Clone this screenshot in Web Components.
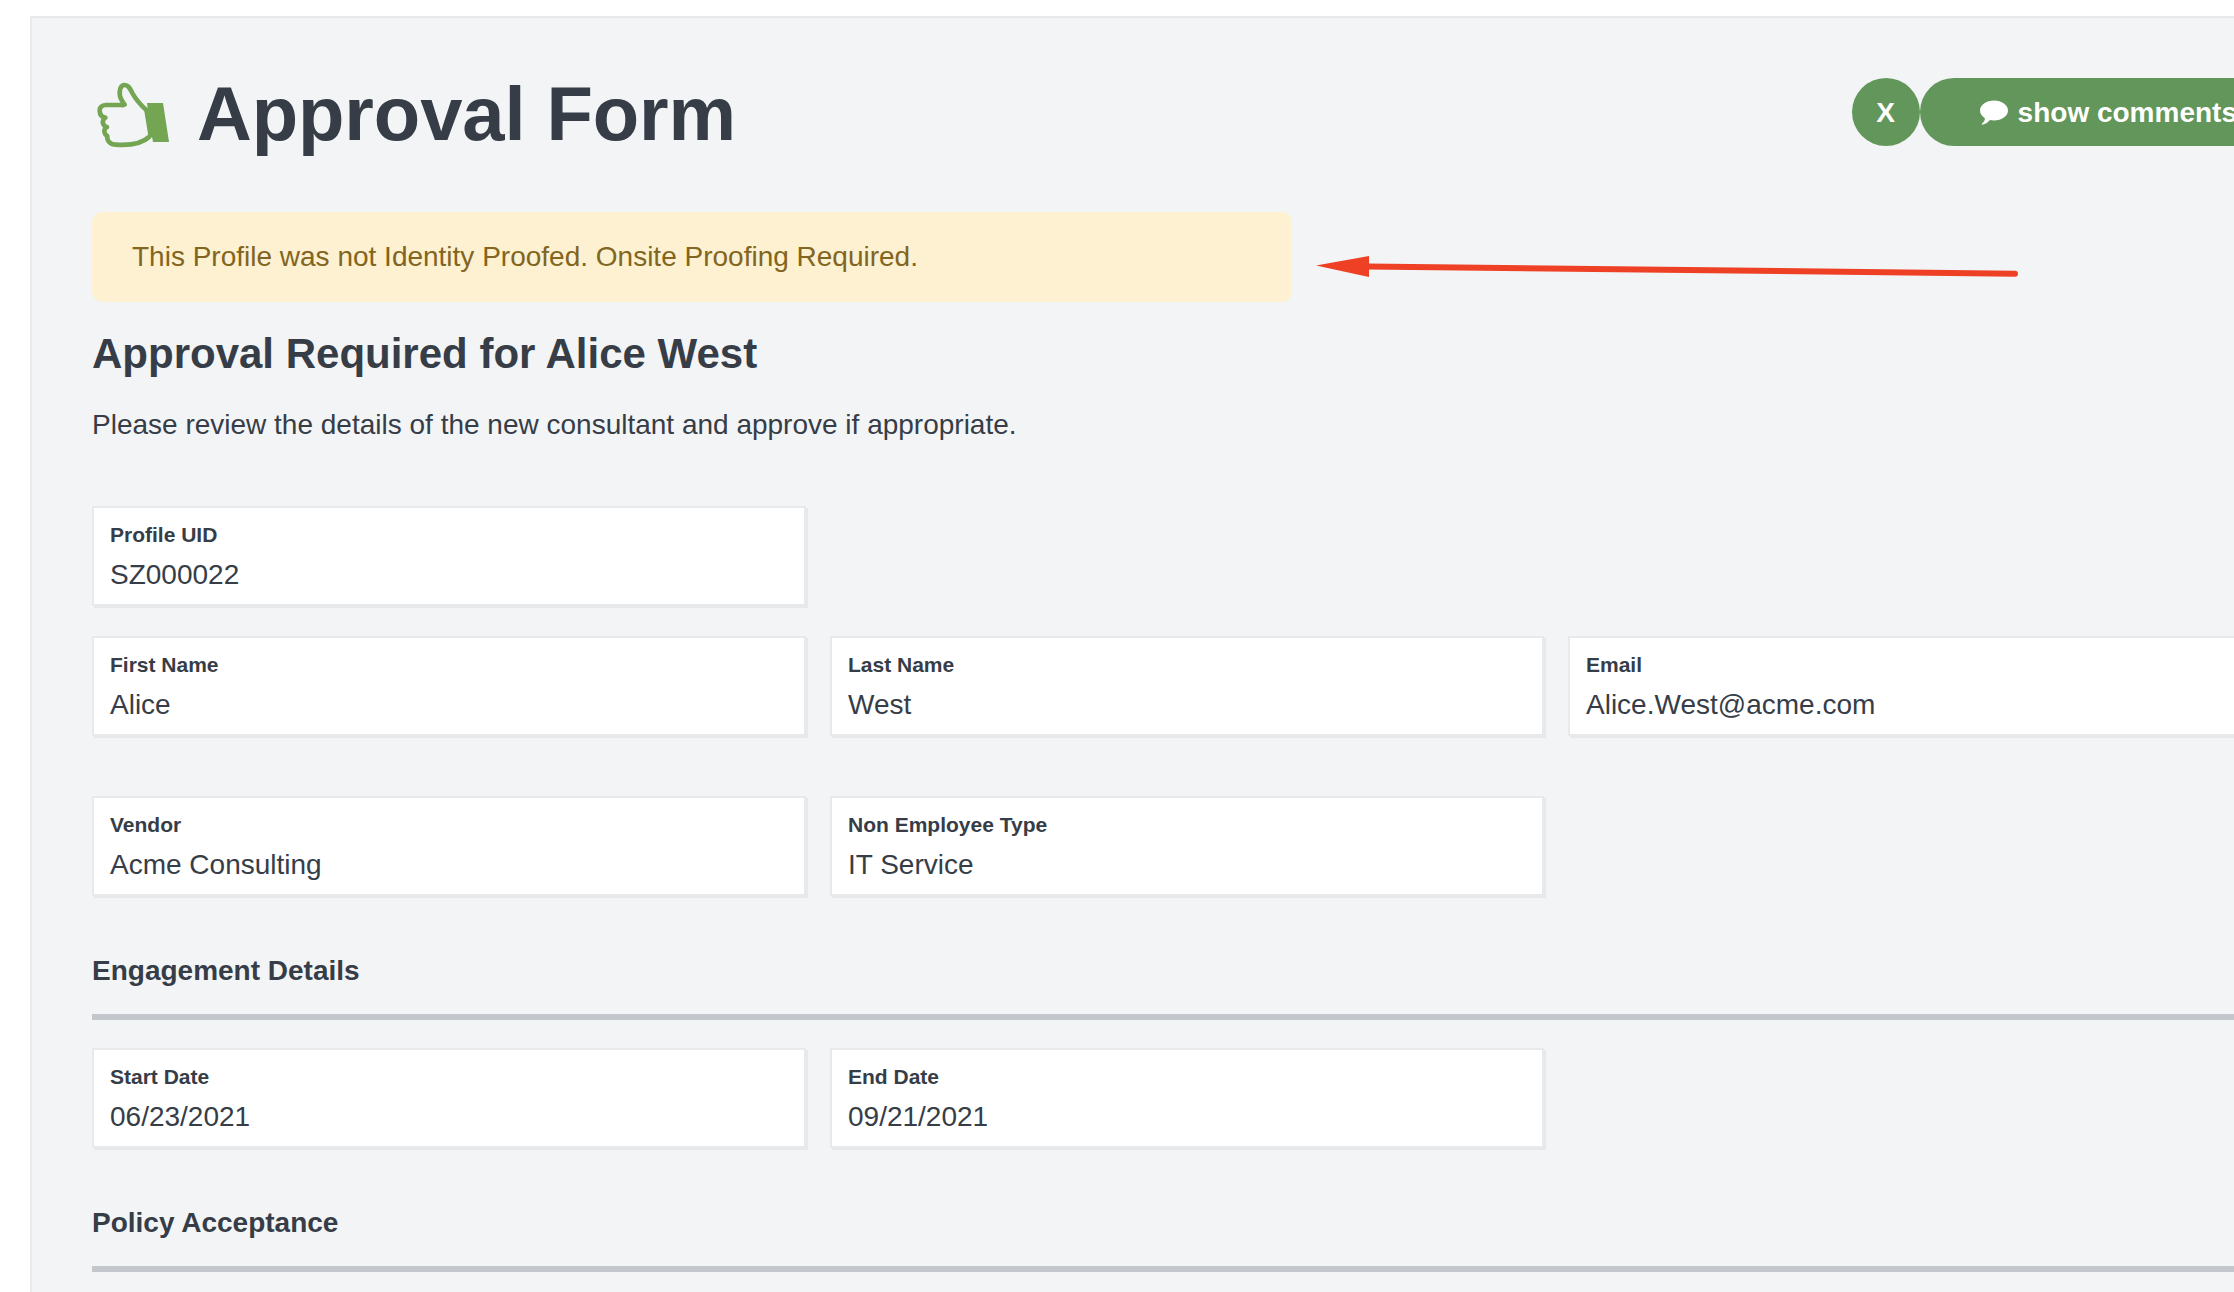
<!DOCTYPE html>
<html lang="en">
<head>
<meta charset="utf-8">
<title>Approval Form</title>
<style>
html,body{margin:0;height:100%;overflow:hidden;background:#fff}
body{font-family:"Liberation Sans",Arial,Helvetica,sans-serif;font-size:28px;color:#363d47}
</style>
</head>
<body>
<approval-page></approval-page>
<script>
const define = (name, html) => {
  const t = document.createElement('template');
  t.innerHTML = html;
  customElements.define(name, class extends HTMLElement {
    constructor() {
      super();
      this.attachShadow({mode: 'open'}).append(t.content.cloneNode(true));
    }
  });
};

define('thumb-icon', `
<style>:host{display:block;width:80px;height:90px}svg{display:block}</style>
<svg width="80" height="90" viewBox="36 0 240 270" aria-hidden="true">
  <path fill="none" stroke="#73a553" stroke-width="14" stroke-linejoin="round" stroke-linecap="round"
    d="M200 121C183 106 166 86 157 69C150 56 146 45 134 45C121 45 117 62 120 78C122 90 129 97 134 104C131 106 128 105 122 105H78C64 105 58 114 59 123C60 137 67 142 76 143C70 147 66 155 70 162C72 167 76 170 81 171C73 175 71 184 75 191C77 195 80 196 82 199C80 212 91 224 108 224C139 226 184 223 207 201C209 199 210 197 211 194"/>
  <path fill="#73a553" d="M201 99H249L267 216H219L216 200L205 197L192 118L203 114Z"/>
</svg>`);

define('comment-icon', `
<style>:host{display:block;width:28px;height:28px}svg{display:block}</style>
<svg width="28" height="28" viewBox="0 0 28 28" aria-hidden="true">
  <path fill="#fff" d="M14 1.6C21.8 1.6 28 6 28 11.6S21.8 21.5 14 21.5C12.6 21.5 11.2 21.4 9.9 21.1C7.6 23.8 5.4 25.2 2.3 25.8C1.6 25.8 1.7 25 2.2 24.5C4 22.8 4.8 21.7 4.9 19.2C1.9 17.4 0 14.6 0 11.6C0 6 6.2 1.6 14 1.6Z"/>
</svg>`);

define('pill-button', `
<style>
:host{box-sizing:border-box;display:flex;align-items:center;justify-content:center;gap:10px;height:68px;min-width:68px;border-radius:34px;background:#63965a;color:#fff;font-weight:700;line-height:66px;padding-top:2px;white-space:nowrap}
:host([wide]){padding:2px 60px 0}
</style><slot></slot>`);

define('page-header', `
<style>
:host{display:flex;justify-content:space-between;height:68px}
.title{display:flex}
thumb-icon{margin-top:-8px}
h1{margin:2px 0 0 25px;font-size:76px;line-height:68px;letter-spacing:-.12px;font-weight:700;white-space:nowrap}
.actions{display:flex}
</style>
<div class="title"><thumb-icon></thumb-icon><h1><slot></slot></h1></div>
<div class="actions"><slot name="actions"></slot></div>`);

define('notice-bar', `
<style>:host{box-sizing:border-box;display:block;width:1200px;height:90px;padding:25px 40px;border-radius:10px;background:#fdf1d2;color:#826520;line-height:40px}</style><slot></slot>`);

define('data-field', `
<style>
:host{box-sizing:border-box;display:block;height:100px;border:2px solid #e7e9eb;background:#fff;box-shadow:2px 2px 0 #e6e8ea;padding:14px 16px 0}
.label{font-size:21px;font-weight:700;line-height:26px;margin-bottom:9px}
.value{line-height:36px}
</style>
<div class="label"><slot name="label"></slot></div><div class="value"><slot></slot></div>`);

define('field-row', `
<style>:host{display:grid;grid-template-columns:repeat(3,714px);gap:24px}</style><slot></slot>`);

define('section-heading', `
<style>
:host{display:block;margin-top:55px}
h3{margin:0 0 23px;font-size:28px;line-height:40px;font-weight:700}
.rule{height:6px;background:#c3c6cb}
</style>
<h3><slot></slot></h3><div class="rule"></div>`);

define('pointer-arrow', `
<style>:host{display:block;position:absolute;left:1310px;top:250px;width:712px;height:32px}svg{display:block}</style>
<svg width="712" height="32" viewBox="1310 250 712 32" aria-hidden="true">
  <path d="M1367 266.4L2015 273.7" stroke="#ee4025" stroke-width="6" stroke-linecap="round"/>
  <path fill="#ee4025" d="M1316 265.6L1369 256V277Z"/>
</svg>`);

define('approval-page', `
<style>
:host{display:block;height:1292px;overflow:hidden;position:relative}
main{box-sizing:border-box;width:2329px;height:1400px;margin:16px 0 0 30px;padding:60px;border:2px solid #e7e9eb;background:#f3f4f6}
notice-bar{margin-top:66px}
h2{margin:27px 0 0;font-size:42px;line-height:50px;font-weight:700}
p{margin:26px 0 0;line-height:40px}
.uid{margin-top:61px}.name{margin-top:30px}.vendor{margin-top:60px}.dates{margin-top:28px}
</style>
<main>
  <page-header>Approval Form
    <pill-button slot="actions">X</pill-button>
    <pill-button slot="actions" wide><comment-icon></comment-icon><span>show comments</span></pill-button>
  </page-header>
  <notice-bar>This Profile was not Identity Proofed. Onsite Proofing Required.</notice-bar>
  <h2>Approval Required for Alice West</h2>
  <p>Please review the details of the new consultant and approve if appropriate.</p>
  <field-row class="uid"><data-field><span slot="label">Profile UID</span>SZ000022</data-field></field-row>
  <field-row class="name">
    <data-field><span slot="label">First Name</span>Alice</data-field>
    <data-field><span slot="label">Last Name</span>West</data-field>
    <data-field><span slot="label">Email</span>Alice.West@acme.com</data-field>
  </field-row>
  <field-row class="vendor">
    <data-field><span slot="label">Vendor</span>Acme Consulting</data-field>
    <data-field><span slot="label">Non Employee Type</span>IT Service</data-field>
  </field-row>
  <section-heading>Engagement Details</section-heading>
  <field-row class="dates">
    <data-field><span slot="label">Start Date</span>06/23/2021</data-field>
    <data-field><span slot="label">End Date</span>09/21/2021</data-field>
  </field-row>
  <section-heading>Policy Acceptance</section-heading>
</main>
<pointer-arrow></pointer-arrow>`);
</script>
</body>
</html>
